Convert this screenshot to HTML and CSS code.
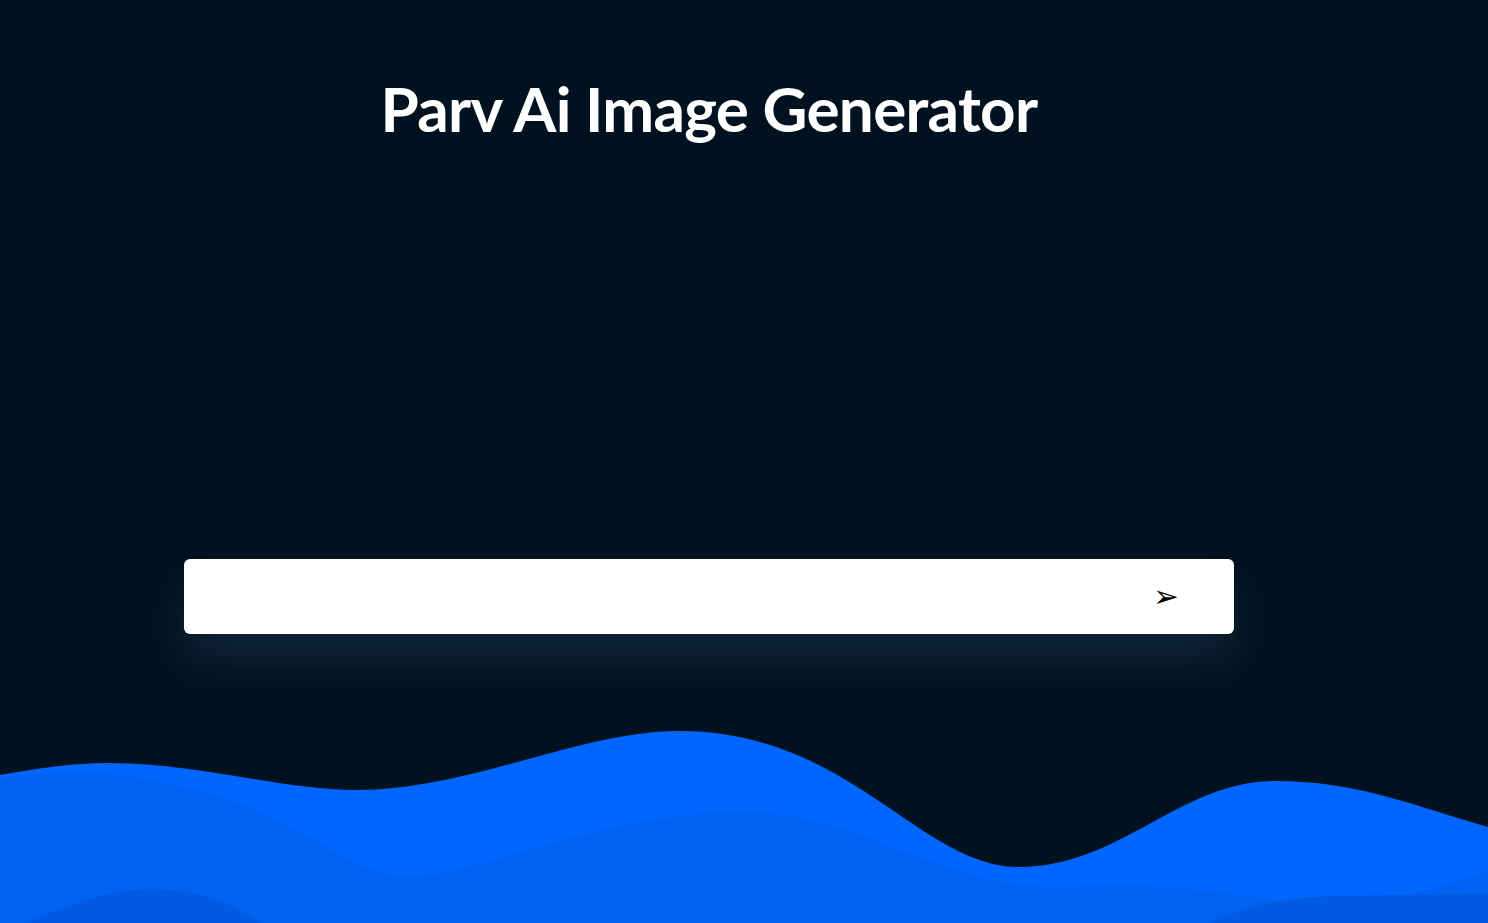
FILE: index.html
```html
<!DOCTYPE html>
<html lang="en">
<head>
<meta charset="utf-8">
<title>Parv Ai Image Generator</title>
<link rel="stylesheet" href="styles.css">
</head>
<body>
<main class="page">
  <h1 class="title">Parv Ai Image Generator</h1>
  <div class="image-area"></div>
  <form class="prompt">
    <input class="prompt-input" type="text" aria-label="Prompt">
    <button class="send" type="button" aria-label="Generate">&#x27A2;</button>
  </form>
</main>
<svg class="waves" viewBox="0 723 1488 200" preserveAspectRatio="none" aria-hidden="true">
  <path class="wave-1" d="M0 775 C40 768 70 763 109 763 C200 763 280 790 356 790 C470 790 580 731 679 731 C850 731 920 867 1019 867 C1120 867 1180 781 1275 781 C1360 781 1420 808 1488 827 L1488 923 L0 923 Z"/>
  <path class="wave-2" d="M0 779 C50 770 130 766 237 803 C320 835 360 877 403 877 C480 877 600 812 744 812 C850 812 950 887 1050 887 C1110 887 1150 884 1200 890 C1260 898 1300 905 1340 903 C1400 900 1450 885 1488 872 L1488 923 L0 923 Z"/>
  <path class="wave-3" d="M0 935 C50 912 100 889 153 889 C200 889 232 905 262 923 L1210 923 C1240 908 1280 898 1330 896 L1488 894 L1488 923 Z"/>
</svg>
</body>
</html>
```
FILE: styles.css
```css
html, body {
  margin: 0;
  padding: 0;
}

body {
  height: 923px;
  overflow: hidden;
  background: #001220;
  display: flex;
  flex-direction: column;
  font-family: "Lato", "DejaVu Sans", sans-serif;
}

.page {
  width: 1050px;
  margin-left: 184px;
  display: flex;
  flex-direction: column;
}

.title {
  margin: 71px 0 0;
  height: 74px;
  line-height: 74px;
  font-size: 62px;
  font-weight: 700;
  color: #ffffff;
  text-align: center;
  letter-spacing: -0.7px;
}

.image-area {
  height: 414px;
}

.prompt {
  height: 75px;
  margin: 0;
  background: #ffffff;
  border-radius: 6px;
  display: flex;
  align-items: center;
  box-shadow: 0 26px 40px rgba(60, 90, 130, 0.24);
}

.prompt-input {
  flex: 1;
  height: 100%;
  border: 0;
  outline: none;
  background: transparent;
  padding: 0 24px;
  font-size: 18px;
  font-family: inherit;
}

.send {
  border: 0;
  background: transparent;
  padding: 0;
  margin-right: 52px;
  width: 32px;
  font-family: "DejaVu Sans", sans-serif;
  font-size: 31px;
  line-height: 1;
  color: #000000;
}

.waves {
  margin-top: auto;
  display: block;
  width: 1488px;
  height: 200px;
}

.wave-1 { fill: #0066ff; }
.wave-2 { fill: #0062f2; }
.wave-3 { fill: #005be2; }
```
